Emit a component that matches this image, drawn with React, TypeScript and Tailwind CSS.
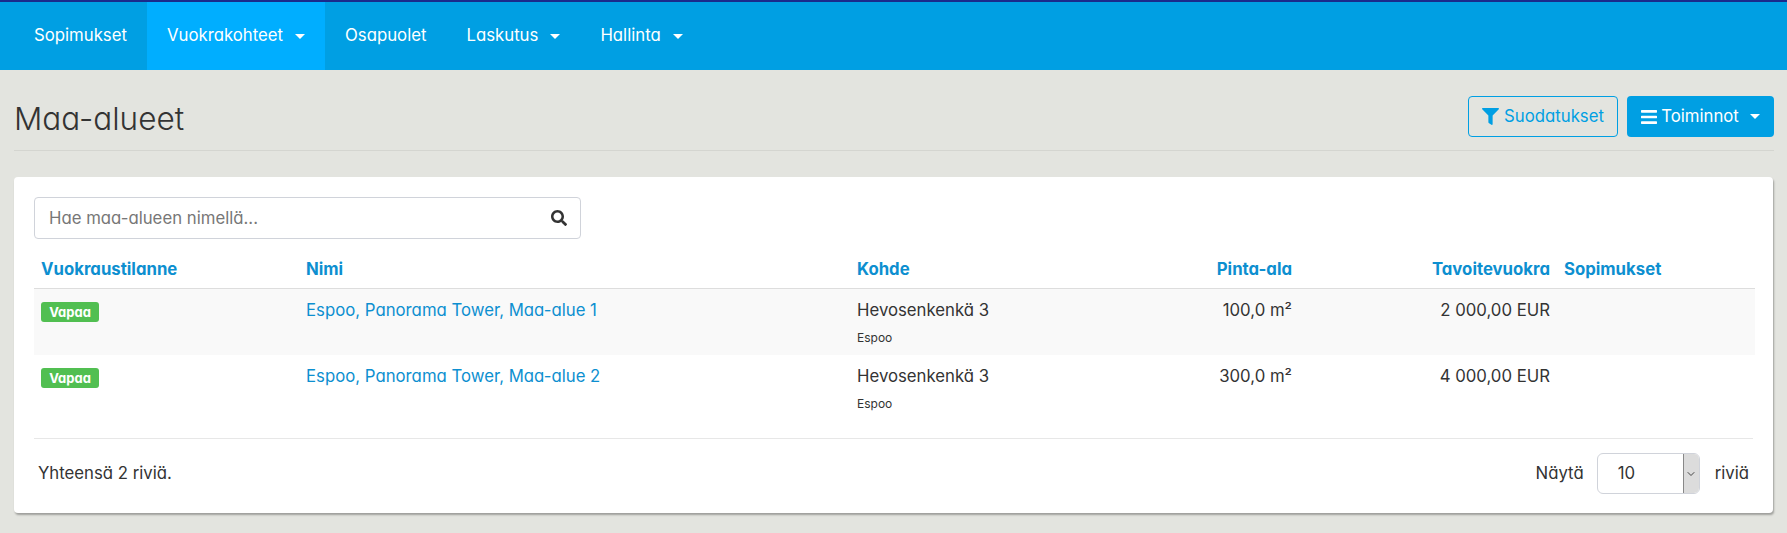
import { FaBars, FaFilter, FaSearch } from 'react-icons/fa';
import { ChevronDown } from 'lucide-react';

const rows = [
  { name: 'Espoo, Panorama Tower, Maa-alue 1', area: '100,0 m²', rent: '2 000,00 EUR', striped: true },
  { name: 'Espoo, Panorama Tower, Maa-alue 2', area: '300,0 m²', rent: '4 000,00 EUR', striped: false },
];

function Caret() {
  return <span className="inline-block w-0 h-0 border-x-[5px] border-x-transparent border-t-[5px] border-t-white" />;
}

function NavItem({ label, caret, active }: { label: string; caret?: boolean; active?: boolean }) {
  return (
    <a className={`h-full px-5 flex items-center gap-3 text-white ${active ? 'bg-[#00aeff]' : ''}`}>
      {label}
      {caret && <Caret />}
    </a>
  );
}

export default function App() {
  return (
    <div className="min-h-[533px] bg-[#e3e4df] text-[16.75px] text-[#333] font-['Inter','Noto_Sans',sans-serif] [font-feature-settings:'cv11']">
      {/* Top navigation */}
      <nav className="h-[70px] bg-[#009fe3] border-t-2 border-[#1a2a8c] flex items-center pl-[14px]">
        <NavItem label="Sopimukset" />
        <NavItem label="Vuokrakohteet" caret active />
        <NavItem label="Osapuolet" />
        <NavItem label="Laskutus" caret />
        <NavItem label="Hallinta" caret />
      </nav>

      {/* Header */}
      <div className="ml-[14px] mr-[13px] h-[81px] pt-[26px] pb-[13px] border-b border-[#d4d5d0] flex items-start justify-between">
        <h1 className="text-[31.5px] leading-[41px] font-light pt-[2px]">Maa-alueet</h1>
        <div className="flex gap-[9px]">
          <button className="w-[150px] h-[41px] rounded border border-[#009fe3] text-[#009fe3] flex items-center justify-center gap-[5px]">
            <FaFilter className="w-[17px] h-[17px]" />
            Suodatukset
          </button>
          <button className="w-[147px] h-[41px] rounded bg-[#009fe3] text-white flex items-center justify-center gap-[4px]">
            <FaBars className="w-4 h-[18px]" preserveAspectRatio="none" />
            Toiminnot
            <span className="ml-[7px] flex"><Caret /></span>
          </button>
        </div>
      </div>

      {/* Card */}
      <div className="mx-[14px] mt-[26px] bg-white rounded-sm shadow-[1px_2px_2px_rgba(0,0,0,0.3)] px-5 pt-5 h-[336px]">
        <div className="w-[547px] h-[42px] border border-[#d0d3da] rounded flex items-center justify-between pl-[14px] pr-[13px]">
          <span className="text-[#777] pt-px">Hae maa-alueen nimellä...</span>
          <FaSearch className="w-4 h-4 text-[#333]" />
        </div>

        <table className="mt-[6px] w-[1721px] table-fixed border-collapse">
          <colgroup>
            <col className="w-[265px]" />
            <col className="w-[551px]" />
            <col className="w-[250px]" />
            <col className="w-[199px]" />
            <col className="w-[258px]" />
            <col />
          </colgroup>
          <thead>
            <tr className="h-[43px] border-b border-[#ddd] text-[#0d8fd0] text-[16.75px] font-bold">
              <th className="px-[7px] pt-[6px] text-left">Vuokraustilanne</th>
              <th className="px-[7px] pt-[6px] text-left">Nimi</th>
              <th className="px-[7px] pt-[6px] text-left">Kohde</th>
              <th className="px-[7px] pt-[6px] text-right">Pinta-ala</th>
              <th className="px-[7px] pt-[6px] text-right">Tavoitevuokra</th>
              <th className="px-[7px] pt-[6px] text-left">Sopimukset</th>
            </tr>
          </thead>
          <tbody>
            {rows.map((row) => (
              <tr key={row.name} className={`h-[67px] align-top ${row.striped ? 'bg-[#f9f9f9]' : ''}`}>
                <td className="px-[7px] pt-[13px]">
                  <span className="block w-[58px] h-5 rounded-[3px] bg-[#51bf51] text-white text-[13px] leading-5 font-bold text-center">Vapaa</span>
                </td>
                <td className="px-[7px] pt-[9px] leading-[24px] text-[#0d8fd0]">{row.name}</td>
                <td className="px-[7px] pt-[9px] leading-[24px]">
                  Hevosenkenkä 3
                  <div className="text-[12px] leading-[18px] mt-[7px]">Espoo</div>
                </td>
                <td className="px-[7px] pt-[9px] leading-[24px] text-right">{row.area}</td>
                <td className="px-[7px] pt-[9px] leading-[24px] text-right">{row.rent}</td>
                <td />
              </tr>
            ))}
          </tbody>
        </table>

        {/* Footer */}
        <div className="mt-4 border-t border-[#e7e7e7] h-[70px] flex items-center justify-between pl-1 pr-1">
          <span>Yhteensä 2 riviä.</span>
          <div className="flex items-center">
            <span>Näytä</span>
            <div className="ml-[13px] w-[103px] h-[41px] border border-[#d0d3da] rounded-md flex overflow-hidden">
              <span className="flex-1 pl-5 leading-[39px]">10</span>
              <span className="w-4 bg-[#dcdcdc] border-l border-[#888] flex items-center justify-center">
                <ChevronDown className="w-3 h-3 text-[#444]" />
              </span>
            </div>
            <span className="ml-[15px]">riviä</span>
          </div>
        </div>
      </div>
    </div>
  );
}
